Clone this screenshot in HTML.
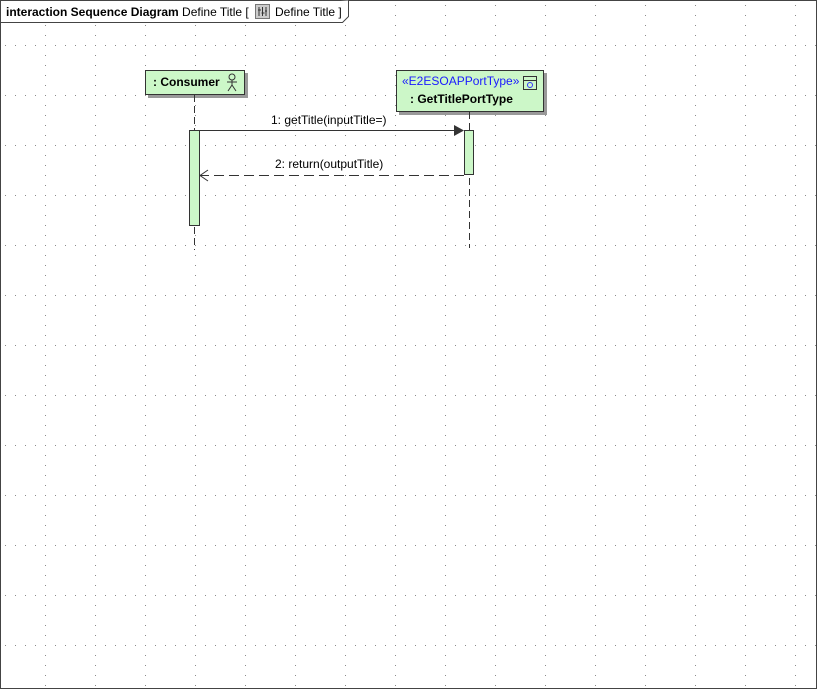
<!DOCTYPE html>
<html><head><style>
body{margin:0;width:817px;height:689px;overflow:hidden;background:#fff;font-family:"Liberation Sans",Arial,sans-serif}
</style></head><body>
<svg width="817" height="689" xmlns="http://www.w3.org/2000/svg" style="display:block">
<defs>
<pattern id="g" x="0" y="0" width="50" height="50" patternUnits="userSpaceOnUse">
<g fill="#8a8a8a">
<rect x="5" y="45" width="1" height="1"/><rect x="15" y="45" width="1" height="1"/><rect x="25" y="45" width="1" height="1"/><rect x="35" y="45" width="1" height="1"/><rect x="45" y="45" width="1" height="1"/>
<rect x="45" y="5" width="1" height="1"/><rect x="45" y="15" width="1" height="1"/><rect x="45" y="25" width="1" height="1"/><rect x="45" y="35" width="1" height="1"/>
</g></pattern>
</defs>
<rect x="0" y="0" width="817" height="689" fill="url(#g)"/>
<rect x="0.5" y="0.5" width="816" height="688" fill="none" stroke="#444"/>
<path d="M0.5 22.5 H342.5 L348.5 16.5 V0.5" fill="#fff" stroke="#444"/>
<rect x="1" y="1" width="341" height="21" fill="#fff"/>
<text x="6" y="16" font-size="12" fill="#000"><tspan font-weight="bold">interaction  Sequence Diagram</tspan> Define Title [</text>
<rect x="255.5" y="4.5" width="14" height="14" fill="#ccc" stroke="#777"/>
<path d="M259 7v9M262.5 7v9M266 7v9M258 10h3M261.5 13h3M265 11h2" stroke="#333" fill="none"/>
<text x="275" y="16" font-size="12" fill="#000">Define Title ]</text>
<!-- consumer -->
<rect x="148" y="73" width="100" height="25" fill="#999"/>
<rect x="145.5" y="70.5" width="99" height="24" fill="#ccf7c8" stroke="#333"/>
<text x="153" y="86" font-size="12" font-weight="bold">: Consumer</text>
<g stroke="#333" fill="none"><circle cx="232" cy="77" r="3"/><path d="M232 80v5M227 82h10M228 91l4-6 4 6"/></g>
<!-- port -->
<rect x="399" y="73" width="148" height="42" fill="#999"/>
<rect x="396.5" y="70.5" width="147" height="41" fill="#ccf7c8" stroke="#333"/>
<text x="402" y="85" font-size="12" fill="#1a1aff">«E2ESOAPPortType»</text>
<rect x="523.5" y="76.5" width="13" height="13" fill="none" stroke="#333"/>
<path d="M523.5 80.5h13" stroke="#333"/><circle cx="530" cy="85" r="2.5" fill="none" stroke="#33f"/>
<text x="410" y="103" font-size="12" font-weight="bold">: GetTitlePortType</text>
<!-- lifelines -->
<path d="M194.5 95v155M469.5 112v136" stroke="#333" stroke-dasharray="7,4"/>
<rect x="189.5" y="130.5" width="10" height="95" fill="#ccf7c8" stroke="#333"/>
<rect x="464.5" y="130.5" width="9" height="44" fill="#ccf7c8" stroke="#333"/>
<path d="M199.5 130.5H455" stroke="#333"/>
<path d="M454 125l10 5.5-10 5.5z" fill="#333"/>
<text x="271" y="124" font-size="12">1: getTitle(inputTitle=)</text>
<path d="M464 175.5H200" stroke="#333" stroke-dasharray="10,5"/>
<path d="M208 170l-8 5.5 8 5.5" stroke="#333" fill="none"/>
<text x="275" y="168" font-size="12">2: return(outputTitle)</text>
</svg>
</body></html>
